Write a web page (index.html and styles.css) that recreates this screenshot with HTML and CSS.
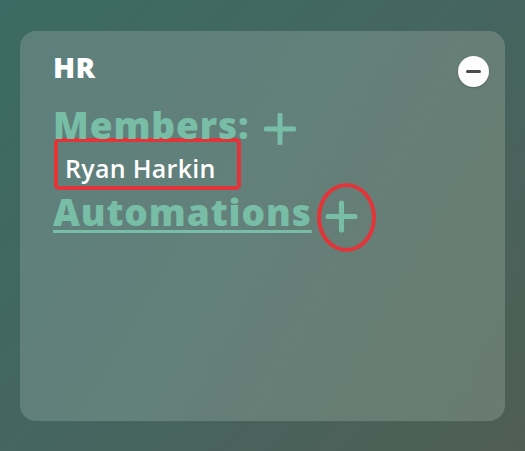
FILE: index.html
```html
<!DOCTYPE html>
<html>
<head>
<meta charset="utf-8">
<link rel="stylesheet" href="styles.css">
</head>
<body>
<div class="card">
  <div class="card-head">
    <div class="title">HR</div>
    <button class="remove-btn" aria-label="Remove"><span class="minus"></span></button>
  </div>
  <div class="section-row">
    <span class="section-label">Members:</span>
    <svg class="plus plus-members" viewBox="0 0 32 32" width="32" height="32"><path d="M16 2v28M2 16h28" stroke="#78bda6" stroke-width="5" stroke-linecap="round" fill="none"/></svg>
  </div>
  <div class="member-box">Ryan Harkin</div>
  <div class="section-row auto-row">
    <span class="section-label link">Automations</span>
    <span class="plus-wrap">
      <svg class="plus plus-auto" viewBox="0 0 32 32" width="33" height="33"><path d="M16 3v26M3 16h26" stroke="#78bda6" stroke-width="5" stroke-linecap="round" fill="none"/></svg>
      <span class="ring"></span>
    </span>
  </div>
</div>
</body>
</html>
```
FILE: styles.css
```css
html, body { margin: 0; padding: 0; }
body {
  width: 525px;
  height: 451px;
  overflow: hidden;
  background: linear-gradient(135deg, #3b6b64 0%, #456560 50%, #4f5e54 100%);
  font-family: "Open Sans", "Liberation Sans", sans-serif;
}
.card {
  margin: 31px 20px 0 20px;
  height: 390px;
  box-sizing: border-box;
  border-radius: 16px;
  background: linear-gradient(120deg, #5d807c 0%, #63807a 45%, #6a7b70 100%);
  padding: 20px 16px 0 33px;
}
.card-head {
  display: flex;
  justify-content: space-between;
  align-items: flex-start;
}
.title {
  color: #ffffff;
  font-weight: 800;
  font-size: 29px;
  line-height: 32px;
  letter-spacing: 0.3px;
}
.remove-btn {
  width: 31px;
  height: 31px;
  border-radius: 50%;
  border: none;
  background: #fdfdfd;
  margin-top: 5px;
  padding: 0;
  display: flex;
  align-items: center;
  justify-content: center;
  box-shadow: 0 1px 2px rgba(0,0,0,0.2);
}
.minus {
  width: 15px;
  height: 3px;
  background: #4a4a4a;
  border-radius: 2px;
}
.section-row {
  display: flex;
  align-items: center;
  margin-top: 18px;
}
.section-label {
  color: #78bda6;
  font-weight: 800;
  font-size: 37px;
  line-height: 38px;
  letter-spacing: 0.9px;
}
.plus-members { margin-left: 14px; margin-top: 8px; }
.member-box {
  margin-top: -7px;
  width: 187px;
  height: 52px;
  box-sizing: border-box;
  border: 4px solid #e2353a;
  border-radius: 5px;
  color: #ffffff;
  font-family: "Open Sans", "Liberation Sans", sans-serif;
  font-weight: 600;
  font-size: 25px;
  letter-spacing: 0.3px;
  padding: 11px 0 0 7px;
  line-height: 30px;
  margin-left: 1px;
}
.auto-row { margin-top: 0; }
.link {
  text-decoration: underline;
  text-decoration-thickness: 3px;
  text-underline-offset: 4px;
}
.plus-wrap {
  position: relative;
  margin-left: 13px;
  margin-top: 10px;
  width: 33px;
  height: 33px;
}
.plus-auto { display: block; }
.ring {
  position: absolute;
  left: -8px;
  top: -17px;
  width: 59px;
  height: 69px;
  box-sizing: border-box;
  border: 4px solid #e2353a;
  border-radius: 50%;
}
```
